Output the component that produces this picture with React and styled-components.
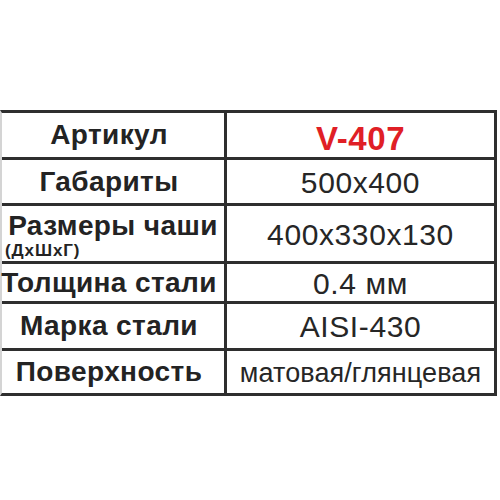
import React from "react";
import styled, { createGlobalStyle } from "styled-components";

const specs = [
  { label: "Артикул", value: "V-407", accent: true },
  { label: "Габариты", value: "500x400" },
  { label: "Размеры чаши", note: "(ДхШхГ)", value: "400x330x130" },
  { label: "Толщина стали", value: "0.4 мм" },
  { label: "Марка стали", value: "AISI-430" },
  { label: "Поверхность", value: "матовая/глянцевая", small: true },
];

const SpecTable = () => {
  return (
    <Page>
      <Table>
        {specs.map((row) => (
          <React.Fragment key={row.label}>
            <LabelCell $stacked={!!row.note}>
              <Label>{row.label}</Label>
              {row.note && <Note>{row.note}</Note>}
            </LabelCell>
            <ValueCell>
              <Value $accent={row.accent} $small={row.small}>
                {row.value}
              </Value>
            </ValueCell>
          </React.Fragment>
        ))}
      </Table>
    </Page>
  );
};

const GlobalStyle = createGlobalStyle`
  body {
    margin: 0;
    background: #ffffff;
    font-family: "Liberation Sans", Arial, sans-serif;
  }
`;

const Page = styled.div`
  width: 500px;
  height: 500px;
  padding-top: 110px;
  box-sizing: border-box;
  background: #ffffff;
`;

const Table = styled.div`
  width: 497px;
  box-sizing: border-box;
  display: grid;
  grid-template-columns: 222px 1fr;
  grid-template-rows: 44px 43px 55px 37px 44px 42px;
  gap: 3px;
  background: #2e2e2e;
  border-top: 3px solid #2e2e2e;
  border-right: 3px solid #2e2e2e;
  border-bottom: 3px solid #2e2e2e;
  border-left: 2px solid #d4d4d4;
`;

const Cell = styled.div`
  background: #ffffff;
  display: flex;
  color: #232323;
  min-width: 0;
`;

const LabelCell = styled(Cell)`
  flex-direction: column;
  justify-content: center;
  align-items: ${(p) => (p.$stacked ? "stretch" : "center")};
  padding-right: ${(p) => (p.$stacked ? "0" : "8px")};
`;

const ValueCell = styled(Cell)`
  align-items: center;
  justify-content: center;
`;

const Label = styled.div`
  font-weight: bold;
  font-size: 28px;
  line-height: 30px;
  letter-spacing: 0.4px;
  text-align: center;
  white-space: nowrap;
`;

const Note = styled.div`
  font-weight: bold;
  font-size: 17px;
  line-height: 19px;
  letter-spacing: 0.9px;
  padding-left: 3px;
  margin-bottom: -3px;
`;

const Value = styled.div`
  font-size: ${(p) => (p.$accent ? "33px" : p.$small ? "27px" : "30px")};
  font-weight: ${(p) => (p.$accent ? "bold" : "normal")};
  color: ${(p) => (p.$accent ? "#e01f26" : "#262626")};
  letter-spacing: ${(p) => (p.$small ? "0.1px" : "0.6px")};
  line-height: 1;
  white-space: nowrap;
  padding-top: ${(p) => (p.$accent ? "6px" : "2px")};
`;

const App = () => (
  <>
    <GlobalStyle />
    <SpecTable />
  </>
);

export default App;
